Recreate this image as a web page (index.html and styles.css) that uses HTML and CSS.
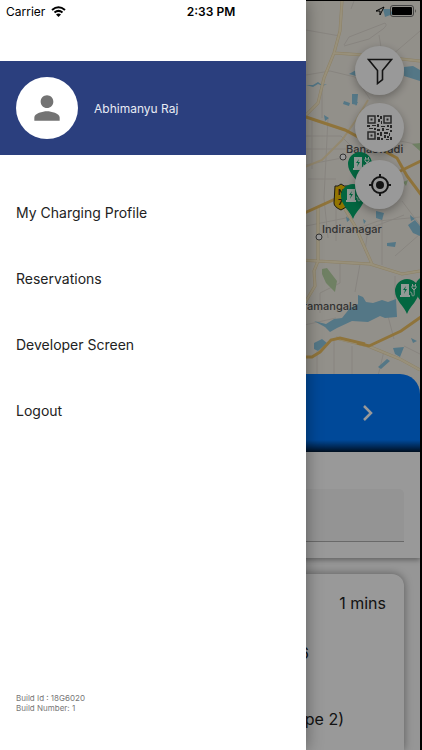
FILE: index.html
```html
<!DOCTYPE html>
<html lang="en">
<head>
    <meta charset="UTF-8">
    <meta name="viewport" content="width=device-width, initial-scale=1.0">
    <title>Charging Stations</title>
    <link rel="stylesheet" href="styles.css">
</head>
<body>
    <div class="app">
        <main class="screen">
            <section class="map">
                <svg class="map-canvas" viewBox="0 0 420 400" preserveAspectRatio="xMaxYMin slice" aria-hidden="true">
                    <defs>
                        <g id="pin">
                            <path d="M0 23C-3 15-12 9-12 0a12 12 0 0 1 24 0C12 9 3 15 0 23z" fill="#06aa6c"/>
                            <path d="M-6-7h8v11h1v2H-7V4h1z" fill="#f2fff8"/>
                            <path d="M-1-5l-3 4h2l-1 4 3-5h-2z" fill="#06aa6c"/>
                            <path d="M3 1c3 0 1 4 3 4s1-4 1-8M5-5h4v2L7-1 5-3zM5.500-5v-2M8.500-5v-2" fill="none" stroke="#f2fff8"/>
                        </g>
                    </defs>
                    <rect width="420" height="400" fill="#f4f0e7"/>
                    <!-- minor streets -->
                    <g fill="none" stroke="#e2ddd4">
                        <path d="M306 29l34 6M344 44l5-8 36-14q3 2-2 6l-14 10-25 7M354 0l-3 8M381 46l-2-12M385 60l35-30M300 75l30-5 25 6 15 22M322 85v32M306 135h35l20 20M328 117l-4 80 4 40M300 165l42-8M306 225l40-8 14-26M336 200v40M345 232l33-12 42-4M365 250l3-22 36-14M382 214v50M340 262v20l-20 10v20M360 263l-5 28M395 275v30M300 325l36-8M317 350v50M334 340v60M300 374h52M352 345v30M384 350l-6 25M395 255l25-22M388 315l6 23"/>
                        <path d="M312 120v48M306 148h40M308 178h28M400 140l20 4M402 200l18 24M404 345l16 8"/>
                    </g>
                    <!-- water -->
                    <g fill="#8cc6df">
                        <path d="M358 294l5 2 3 5 7 1 9-3 6 2 8-3 1 18-12 1-5-2-12 6-16-1-15 7-7 4-5-5-11-6 12 3 8-5 8-1 8-10 8-4z"/>
                        <path d="M404 66l9-1 7 4v11l-16-5zM349 73l7-4v6zM352 93h6l-1 11-5-1zM383 8l7 0 3 5-8 3zM344 100l6 2-1 3-6-2zM324 114l5 3-4 3zM354 101l4 0-2 4zM408 224l7-5 5 6v10l-7-3zM376 210l8 2-2 7-6-2zM387 242l9-1-1 5-8-1zM363 218l3 2-2 3zM346 216l5 2-4 3zM314 342l8-4 5 4-9 8-4-2zM393 347l11-1-4 10-5-3zM378 366l9-8 3 2-9 8zM411 337l6 3-4 2zM410 214l5 4-4 2z"/>
                        <path d="M306 84l7 0 5-3 4 3 5-1-4 2-5-2-5 3z"/>
                    </g>
                    <path d="M322 268l5-1 10 13-2 11-9-9-4-9zM412 143l8-1v8zM403 181l5-2-2 6z" fill="#b9d6a5"/>
                    <!-- main roads -->
                    <path d="M342 0l-2 30-6 22-10 25-6 25-18 18M334 52l30 2 56 6M318 205v55l-4 10 1 15-12 20M300 259l70 4 32 10 18-3M343 205l12 20 17 38M336 337l32 8 32 13 20 11" fill="none" stroke="#ead7a8" stroke-width="3"/>
                    <path d="M342 0l-2 30-6 22-10 25-6 25-18 18M334 52l30 2 56 6M318 205v55l-4 10 1 15-12 20M300 259l70 4 32 10 18-3M343 205l12 20 17 38M336 337l32 8 32 13 20 11" fill="none" stroke="#fdf0cc" stroke-width="2"/>
                    <path d="M300 168l22-9 20-20 14-20 12-20" fill="none" stroke="#f6e3b8" stroke-width="2"/>
                    <path d="M300 114l45 15 30 16 22 12 10 18 15 20M300 214l40-18 40-16 45-22M300 356h12l8-5 11-12 9-2 25 6M357 342l12 3 32-15 20-14" fill="none" stroke="#efc163" stroke-width="3"/>
                    <g class="place">
                        <circle cx="343" cy="156" r="3"/>
                        <text x="346" y="152">Banaswadi</text>
                        <circle cx="319" cy="236" r="3"/>
                        <text x="322" y="232">Indiranagar</text>
                        <text x="358" y="309" text-anchor="end">Koramangala</text>
                    </g>
                    <path d="M335 185q3 1 6-2 3 3 7 2l1 17q-1 4-8 7-7-3-7-7z" fill="#f5c300" stroke="#302c20" stroke-width="1"/>
                    <text class="shield" x="338" y="194">N</text>
                    <text class="shield" x="338" y="204">7</text>
                    <use href="#pin" x="360" y="163"/>
                    <use href="#pin" x="353" y="195"/>
                    <use href="#pin" x="427" y="287"/>
                    <use href="#pin" x="407" y="290"/>
                </svg>
                <div class="map-actions">
                    <button class="fab" aria-label="Filter">
                        <svg width="26" height="28" viewBox="0 0 26 28"><path d="M1.500 2.500h23l-9 11v9l-5 4v-13z" fill="none" stroke="#222" stroke-width="1.600"/></svg>
                    </button>
                    <button class="fab" aria-label="Scan QR code">
                        <svg width="25" height="25" viewBox="0 0 25 25" fill="#444">
                            <path d="M1 1h7v7H1zM17 1h7v7h-7zM1 17h7v7H1z" fill="none" stroke="#444" stroke-width="1.500"/>
                            <path d="M3.500 3.500h2v2h-2zM19.500 3.500h2v2h-2zM3.500 19.500h2v2h-2zM10 0h2v2h-2zM13 1h2v3h-2zM11 4h2v3h-2zM14 6h1v3h-1zM0 10h3v2H0zM5 10h4v1H5zM10 9h2v3h-2zM14 11h4v1h-4zM20 10h2v2h-2zM23 10h2v3h-2zM2 13h4v1H2zM7 13h2v2H7zM10 14h3v2h-3zM15 13h2v3h-2zM19 14h3v1h-3zM23 15h2v2h-2zM10 18h2v2h-2zM13 17h2v4h-2zM17 17h4v2h-4zM22 18h1v3h-1zM17 20h2v3h-2zM20 21h2v2h-2zM10 22h3v3h-3zM14 23h2v2h-2zM19 24h3v1h-3zM23 22h2v3h-2z"/>
                        </svg>
                    </button>
                    <button class="fab" aria-label="My location">
                        <svg width="24" height="24" viewBox="0 0 24 24"><circle cx="12" cy="12" r="4" fill="#222"/><circle cx="12" cy="12" r="8" fill="none" stroke="#222" stroke-width="2"/><path d="M12 1v3M12 20v3M1 12h3M20 12h3" stroke="#222" stroke-width="2"/></svg>
                    </button>
                </div>
            </section>
            <button class="banner" aria-label="Next">
                <svg width="12" height="16" viewBox="0 0 12 16"><path d="M2 1l7 7-7 7" fill="none" stroke="#fff" stroke-width="2.500"/></svg>
            </button>
            <section class="search">
                <input class="search-field" type="text" aria-label="Search">
            </section>
            <section class="stations">
                <article class="card">
                    <p class="time">1 mins</p>
                    <p class="address">6</p>
                    <p class="plug">(Type 2)</p>
                </article>
            </section>
        </main>
        <div class="scrim"></div>
        <aside class="drawer">
            <header class="profile">
                <div class="avatar">
                    <svg width="38" height="38" viewBox="0 0 24 24" fill="#737373"><path d="M12 12c2.200 0 4-1.800 4-4s-1.800-4-4-4-4 1.800-4 4 1.800 4 4 4zm0 2c-2.700 0-8 1.300-8 4v2h16v-2c0-2.700-5.300-4-8-4z"/></svg>
                </div>
                <span class="name">Abhimanyu Raj</span>
            </header>
            <nav class="menu">
                <a href="#profile">My Charging Profile</a>
                <a href="#reservations">Reservations</a>
                <a href="#developer">Developer Screen</a>
                <a href="#logout">Logout</a>
            </nav>
            <footer class="build">
                <div>Build Id : 18G6020</div>
                <div>Build Number: 1</div>
            </footer>
        </aside>
        <div class="status-bar">
            <div class="carrier">
                <span>Carrier</span>
                <svg width="15" height="11" viewBox="0 0 15 11" fill="none" stroke="#000" stroke-width="2"><path d="M1 4q6.500-5.500 13 0M3.500 6.600q4-3.400 8 0"/><path d="M5 8.500q2.500-2 5 0L7.500 11z" fill="#000" stroke="none"/></svg>
            </div>
            <span class="clock">2:33 PM</span>
            <div class="battery">
                <svg width="10" height="10" viewBox="0 0 10 10"><path d="M9 1L1 5h4v4z" fill="none" stroke="#000"/></svg>
                <svg width="26" height="12" viewBox="0 0 26 12"><rect x=".5" y=".5" width="23" height="11" rx="2.500" fill="none" stroke="#444"/><rect x="2" y="2" width="20" height="8" rx="1"/><path d="M25 4q1 2 0 4z"/></svg>
            </div>
        </div>
    </div>
</body>
</html>
```

FILE: styles.css
```css
* {
    box-sizing: border-box;
}
body {
    font-family: Inter, 'Liberation Sans', sans-serif;
    margin: 0;
    color: #222;
}
p {
    margin: 0;
}
button {
    border: none;
    padding: 0;
    cursor: pointer;
}
.app {
    position: relative;
    min-height: 100vh;
    overflow: hidden;
    background-color: #000;
}
.screen {
    display: flex;
    flex-direction: column;
    min-height: 100vh;
    border-top: 1px solid #000;
    border-right: 2px solid #000;
    background-color: #fafafa;
}
.map {
    display: grid;
    height: 373px;
}
.map-canvas {
    grid-area: 1 / 1;
    width: 100%;
    height: 400px;
}
.place {
    font-size: 11px;
    font-weight: 500;
    fill: #555;
}
.place circle {
    fill: #fff;
    stroke: #555;
}
.shield {
    font-size: 8px;
    font-weight: 700;
    fill: #302c20;
}
.map-actions {
    grid-area: 1 / 1;
    z-index: 1;
    justify-self: end;
    display: flex;
    flex-direction: column;
    gap: 8px;
    padding: 45px 16px 0 0;
}
.fab {
    display: flex;
    justify-content: center;
    align-items: center;
    width: 49px;
    height: 49px;
    border-radius: 50%;
    background-color: #fff;
    box-shadow: 0 3px 8px rgba(0, 0, 0, 0.3);
}
.banner {
    z-index: 1;
    display: flex;
    justify-content: flex-end;
    align-items: center;
    height: 78px;
    padding-right: 46px;
    border-radius: 0 20px 0 0;
    background: linear-gradient(#007aff 0, #007aff 66px, #001c3a 78px);
}
.search {
    z-index: 1;
    padding: 37px 16px 16px;
    background-color: #fff;
    box-shadow: 0 2px 5px rgba(0, 0, 0, 0.35);
}
.search-field {
    display: block;
    width: 100%;
    height: 53px;
    border: none;
    border-bottom: 1px solid #b0b0b0;
    border-radius: 5px 5px 0 0;
    background-color: #f7f7f7;
}
.stations {
    flex: 1;
    display: flex;
    padding: 16px 16px 0;
}
.card {
    flex: 1;
    padding: 18px;
    border-radius: 12px 12px 0 0;
    background-color: #fff;
    box-shadow: 0 0 8px rgba(0, 0, 0, 0.4);
    font-size: 16px;
    line-height: 22px;
    text-align: right;
}
.address {
    padding: 28px 77px 0 0;
}
.plug {
    padding: 44px 42px 0 0;
}
.scrim {
    position: absolute;
    inset: 0;
    z-index: 2;
    background-color: rgba(0, 0, 0, 0.4);
}
.drawer {
    position: absolute;
    top: 0;
    bottom: 0;
    left: 0;
    z-index: 3;
    display: flex;
    flex-direction: column;
    width: 72.5%;
    padding-top: 61px;
    background-color: #fff;
    box-shadow: 0 0 16px rgba(0, 0, 0, 0.4);
}
.profile {
    display: flex;
    align-items: center;
    gap: 16px;
    padding: 16px;
    background-color: #2b3f7e;
}
.avatar {
    display: flex;
    justify-content: center;
    align-items: center;
    width: 62px;
    height: 62px;
    border-radius: 50%;
    background-color: #fff;
}
.name {
    color: #e8ebf4;
    font-size: 12px;
}
.menu {
    display: flex;
    flex-direction: column;
    padding-top: 25px;
}
.menu a {
    padding: 0 16px;
    color: #222;
    font-size: 14px;
    line-height: 66px;
    text-decoration: none;
}
.build {
    margin-top: auto;
    padding: 0 16px 37px;
    color: #777;
    font-size: 8px;
    line-height: 10px;
}
.status-bar {
    position: absolute;
    top: 0;
    left: 0;
    right: 0;
    z-index: 4;
    display: grid;
    grid-template-columns: 1fr auto 1fr;
    align-items: center;
    height: 22px;
    padding: 0 6px;
    color: #000;
    font-size: 12px;
}
.carrier {
    display: flex;
    align-items: center;
    gap: 6px;
}
.clock {
    font-weight: 600;
}
.battery {
    display: flex;
    justify-content: flex-end;
    align-items: center;
    gap: 5px;
}
```
